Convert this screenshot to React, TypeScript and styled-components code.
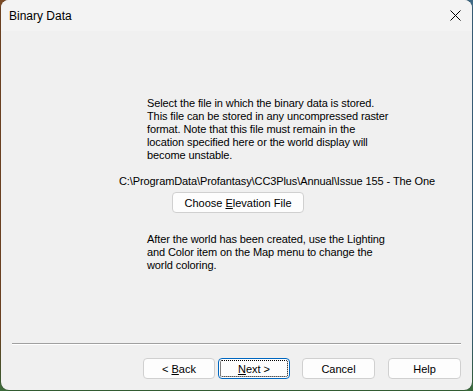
import React from "react";
import styled, { createGlobalStyle } from "styled-components";

const Global = createGlobalStyle`
  html, body { margin: 0; padding: 0; }
  body {
    width: 473px; height: 391px; overflow: hidden;
    background: linear-gradient(90deg, #7a4a26 0%, #6b6a3a 40%, #3f6a86 100%);
  }
  #root { width: 473px; height: 391px; }
`;

const Desk = styled.div`
  width: 473px;
  height: 391px;
  padding: 0 1px 1px 1px;
  box-sizing: border-box;
  background: linear-gradient(180deg, transparent 0%, transparent 85%, #3a6a3a 100%);
`;

const Window = styled.div`
  width: 471px;
  height: 390px;
  border-radius: 8px;
  overflow: hidden;
  background: #f0f0f0;
  display: flex;
  flex-direction: column;
  box-shadow: 0 0 0 0.5px rgba(0,0,0,0.25);
`;

const TitleBar = styled.div`
  height: 31px;
  flex: none;
  background: #f3f3f3;
  display: flex;
  align-items: center;
  justify-content: space-between;
  padding: 0 8px 0 8px;
  font-family: "Segoe UI", "Liberation Sans", sans-serif;
  font-size: 12px;
  color: #000;
`;

const Title = styled.span`
  padding-top: 1px;
`;

const CloseBtn = styled.div`
  width: 14px;
  height: 14px;
  display: flex;
  align-items: center;
  justify-content: center;
  margin-right: 2px;
`;

const Body = styled.div`
  flex: 1;
  display: flex;
  flex-direction: column;
  font-family: "Liberation Sans", Arial, sans-serif;
  font-size: 11px;
  line-height: 13px;
  letter-spacing: -0.1px;
  color: #000;
  padding-top: 66px;
`;

const Para = styled.p<{ $indent: number }>`
  margin: 0 0 0 ${(p) => p.$indent}px;
  white-space: nowrap;
`;

const PathLine = styled.div`
  margin: 13px 0 0 118px;
  white-space: nowrap;
`;

const ChooseRow = styled.div`
  margin: 4px 0 0 171px;
`;

const Button = styled.button<{ $w: number; $focus?: boolean }>`
  width: ${(p) => p.$w}px;
  height: 21px;
  box-sizing: border-box;
  padding: 0;
  background: #fdfdfd;
  border: 1px solid ${(p) => (p.$focus ? "#0067c0" : "#d0d0d0")};
  border-radius: 4px;
  font-family: "Liberation Sans", Arial, sans-serif;
  font-size: 11px;
  color: #000;
  display: flex;
  align-items: center;
  justify-content: center;
  position: relative;
  ${(p) =>
    p.$focus
      ? `&::after { content: ""; position: absolute; inset: 1px; border: 1px dotted #000; border-radius: 2px; }`
      : ""}
`;

const Label = styled.span`
  white-space: pre;
`;

const Second = styled.div`
  margin-top: 20px;
`;

const Footer = styled.div`
  flex: none;
  padding: 0 11px 11px 11px;
  display: flex;
  flex-direction: column;
`;

const Separator = styled.div`
  height: 1px;
  background: #a0a0a0;
  border-bottom: 1px solid #ffffff;
`;

const ButtonRow = styled.div`
  display: flex;
  justify-content: flex-end;
  margin-top: 13px;
`;

const Gap = styled.div<{ $w: number }>`
  width: ${(p) => p.$w}px;
`;

const U = styled.span`
  text-decoration: underline;
`;

export default function App() {
  return (
    <>
      <Global />
      <Desk>
        <Window>
          <TitleBar>
            <Title>Binary Data</Title>
            <CloseBtn>
              <svg width="11" height="11" viewBox="0 0 11 11">
                <path d="M0.5 0.5 L10.5 10.5 M10.5 0.5 L0.5 10.5" stroke="#000" strokeWidth="1" />
              </svg>
            </CloseBtn>
          </TitleBar>
          <Body>
            <Para $indent={146}>
              Select the file in which the binary data is stored.
              <br />
              This file can be stored in any uncompressed raster
              <br />
              format. Note that this file must remain in the
              <br />
              location specified here or the world display will
              <br />
              become unstable.
            </Para>
            <PathLine>C:\ProgramData\Profantasy\CC3Plus\Annual\Issue 155 - The One</PathLine>
            <ChooseRow>
              <Button $w={132}>
                <Label>
                  Choose <U>E</U>levation File
                </Label>
              </Button>
            </ChooseRow>
            <Second>
              <Para $indent={146}>
                After the world has been created, use the Lighting
                <br />
                and Color item on the Map menu to change the
                <br />
                world coloring.
              </Para>
            </Second>
          </Body>
          <Footer>
            <Separator />
            <ButtonRow>
              <Button $w={72}>
                <Label>
                  &lt; <U>B</U>ack
                </Label>
              </Button>
              <Gap $w={3} />
              <Button $w={72} $focus>
                <Label>
                  <U>N</U>ext &gt;
                </Label>
              </Button>
              <Gap $w={12} />
              <Button $w={73}>
                <Label>Cancel</Label>
              </Button>
              <Gap $w={13} />
              <Button $w={73}>
                <Label>Help</Label>
              </Button>
            </ButtonRow>
          </Footer>
        </Window>
      </Desk>
    </>
  );
}
